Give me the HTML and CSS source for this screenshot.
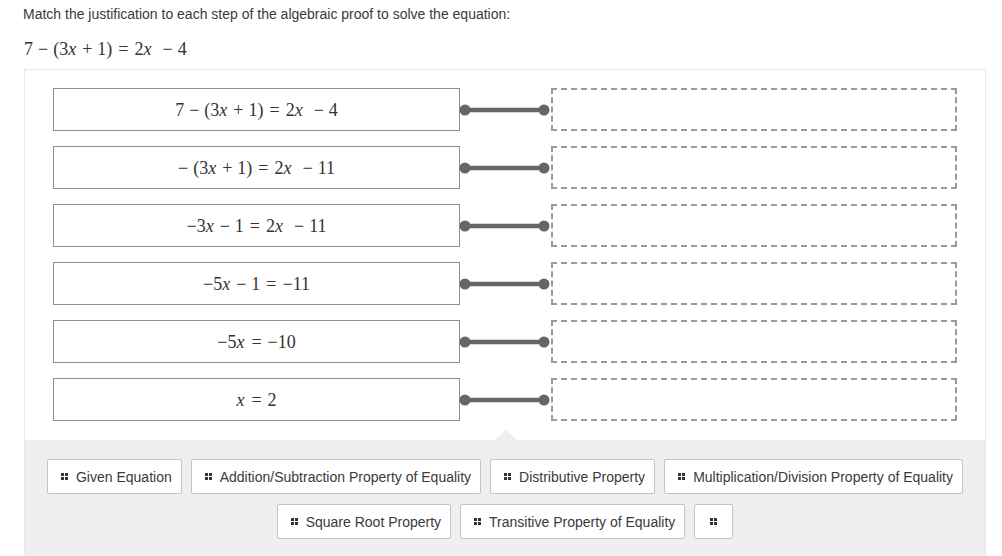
FILE: index.html
```html
<!DOCTYPE html>
<html>
<head>
<meta charset="utf-8">
<link rel="stylesheet" href="styles.css">
</head>
<body>
<p class="prompt">Match the justification to each step of the algebraic proof to solve the equation:</p>
<p class="eq-title math">7<span class="bin">−</span>(3<i>x</i><span class="bin">+</span>1)<span class="rel">=</span>2<i>x</i><span class="sp"></span><span class="bin">−</span>4</p>
<div class="question">
  <div class="rows">
    <div class="row">
      <div class="step math">7<span class="bin">−</span>(3<i>x</i><span class="bin">+</span>1)<span class="rel">=</span>2<i>x</i><span class="sp"></span><span class="bin">−</span>4</div>
      <svg class="link" width="91" height="12" viewBox="0 0 91 12"><line x1="6" y1="6" x2="85" y2="6" stroke="#666" stroke-width="4.5"/><circle cx="6" cy="6" r="5.5" fill="#666"/><circle cx="85" cy="6" r="5.5" fill="#666"/></svg>
      <div class="drop"></div>
    </div>
    <div class="row">
      <div class="step math"><span class="bin lead">−</span>(3<i>x</i><span class="bin">+</span>1)<span class="rel">=</span>2<i>x</i><span class="sp"></span><span class="bin">−</span>11</div>
      <svg class="link" width="91" height="12" viewBox="0 0 91 12"><line x1="6" y1="6" x2="85" y2="6" stroke="#666" stroke-width="4.5"/><circle cx="6" cy="6" r="5.5" fill="#666"/><circle cx="85" cy="6" r="5.5" fill="#666"/></svg>
      <div class="drop"></div>
    </div>
    <div class="row">
      <div class="step math">−3<i>x</i><span class="bin">−</span>1<span class="rel">=</span>2<i>x</i><span class="sp"></span><span class="bin">−</span>11</div>
      <svg class="link" width="91" height="12" viewBox="0 0 91 12"><line x1="6" y1="6" x2="85" y2="6" stroke="#666" stroke-width="4.5"/><circle cx="6" cy="6" r="5.5" fill="#666"/><circle cx="85" cy="6" r="5.5" fill="#666"/></svg>
      <div class="drop"></div>
    </div>
    <div class="row">
      <div class="step math">−5<i>x</i><span class="bin">−</span>1<span class="rel">=</span>−11</div>
      <svg class="link" width="91" height="12" viewBox="0 0 91 12"><line x1="6" y1="6" x2="85" y2="6" stroke="#666" stroke-width="4.5"/><circle cx="6" cy="6" r="5.5" fill="#666"/><circle cx="85" cy="6" r="5.5" fill="#666"/></svg>
      <div class="drop"></div>
    </div>
    <div class="row">
      <div class="step math">−5<i>x</i><span class="rel">=</span>−10</div>
      <svg class="link" width="91" height="12" viewBox="0 0 91 12"><line x1="6" y1="6" x2="85" y2="6" stroke="#666" stroke-width="4.5"/><circle cx="6" cy="6" r="5.5" fill="#666"/><circle cx="85" cy="6" r="5.5" fill="#666"/></svg>
      <div class="drop"></div>
    </div>
    <div class="row">
      <div class="step math"><i>x</i><span class="rel">=</span>2</div>
      <svg class="link" width="91" height="12" viewBox="0 0 91 12"><line x1="6" y1="6" x2="85" y2="6" stroke="#666" stroke-width="4.5"/><circle cx="6" cy="6" r="5.5" fill="#666"/><circle cx="85" cy="6" r="5.5" fill="#666"/></svg>
      <div class="drop"></div>
    </div>
  </div>
  <div class="bank">
    <span class="notch"></span>
    <div class="chips">
      <div class="chip"><span class="grip"></span>Given Equation</div>
      <div class="chip"><span class="grip"></span>Addition/Subtraction Property of Equality</div>
      <div class="chip"><span class="grip"></span>Distributive Property</div>
      <div class="chip"><span class="grip"></span>Multiplication/Division Property of Equality</div>
      <div class="chip"><span class="grip"></span>Square Root Property</div>
      <div class="chip"><span class="grip"></span>Transitive Property of Equality</div>
      <div class="chip empty"><span class="grip"></span></div>
    </div>
  </div>
</div>
</body>
</html>
```
FILE: styles.css
```css
html, body {
  margin: 0;
  padding: 0;
  background: #fff;
}
body {
  padding: 5px 16px 0 24px;
  font-family: "Liberation Sans", Arial, sans-serif;
  color: #333;
  overflow: hidden;
}
.prompt {
  margin: 0 0 0 -1px;
  font-size: 14px;
  line-height: 18px;
  color: #3a3a3a;
}
.math {
  font-family: "Liberation Serif", "DejaVu Serif", serif;
  font-size: 18px;
  color: #333;
  white-space: nowrap;
}
.math i {
  font-style: italic;
  padding-right: 1px;
}
.bin {
  margin: 0 5px;
}
.bin.lead {
  margin-left: 0;
}
.rel {
  margin: 0 6px;
}
.sp {
  display: inline-block;
  width: 5px;
}
.eq-title {
  margin: 16px 0 0 0;
  line-height: 20px;
  height: 30px;
}
.question {
  width: 960px;
  border: 1px solid #e8e8e8;
  border-bottom: none;
}
.rows {
  padding: 18px 28px 19px 28px;
  display: flex;
  flex-direction: column;
  gap: 15px;
}
.row {
  display: flex;
  align-items: center;
  height: 43px;
}
.step {
  box-sizing: border-box;
  width: 407px;
  height: 43px;
  border: 1px solid #8f8f8f;
  display: flex;
  align-items: center;
  justify-content: center;
  padding-top: 1px;
}
.link {
  display: block;
  flex: none;
  margin-left: -1px;
  margin-right: 1px;
  margin-top: 1px;
}
.drop {
  box-sizing: border-box;
  width: 406px;
  height: 43px;
  border: 2px dashed #9a9a9a;
}
.bank {
  position: relative;
  background: #efefef;
  padding: 19px 0 20px 0;
}
.notch {
  position: absolute;
  left: 470px;
  top: -10px;
  width: 0;
  height: 0;
  border-left: 11px solid transparent;
  border-right: 11px solid transparent;
  border-bottom: 10px solid #efefef;
}
.chips {
  display: flex;
  flex-wrap: wrap;
  justify-content: center;
  gap: 10px 9px;
  padding: 0 20px;
}
.chip {
  box-sizing: border-box;
  height: 35px;
  display: flex;
  align-items: center;
  background: #fff;
  border: 1px solid #c4c4c4;
  border-radius: 2px;
  padding: 0 9px 0 13px;
  font-size: 14px;
  color: #3a3a3a;
  white-space: nowrap;
}
.chip.empty {
  padding: 0 15px 0 15px;
}
.grip {
  display: inline-block;
  width: 7px;
  height: 7px;
  margin-right: 8px;
  background:
    linear-gradient(#333, #333) 0 0 / 3px 3px no-repeat,
    linear-gradient(#333, #333) 4px 0 / 3px 3px no-repeat,
    linear-gradient(#333, #333) 0 4px / 3px 3px no-repeat,
    linear-gradient(#333, #333) 4px 4px / 3px 3px no-repeat;
}
.chip.empty .grip {
  margin-right: 0;
}
```
